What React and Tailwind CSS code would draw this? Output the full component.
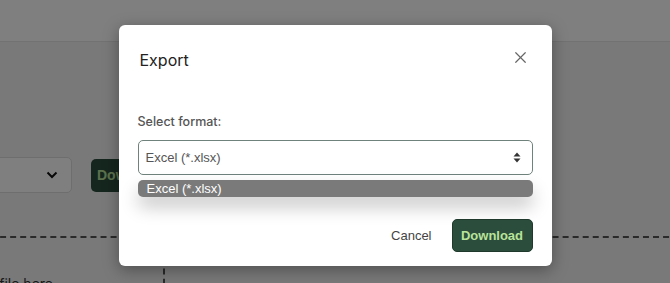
import { X } from 'lucide-react';

function UpDown() {
  return (
    <svg width="8" height="11" viewBox="0 0 8 11" className="text-[#333]">
      <path d="M4 0.5 L7.5 4.5 H0.5 Z" fill="currentColor" />
      <path d="M4 10.5 L7.5 6.5 H0.5 Z" fill="currentColor" />
    </svg>
  );
}

function Chevron() {
  return (
    <svg width="12" height="8" viewBox="0 0 12 8">
      <path d="M1.5 1.5 L6 6 L10.5 1.5" fill="none" stroke="#111" strokeWidth="2" />
    </svg>
  );
}

function BackgroundPage() {
  return (
    <div className="h-[283px] w-[670px] bg-[#f3f3f3] overflow-hidden">
      <div className="h-[42px] bg-white border-b border-[#e4e4e4]" />
      <div className="flex items-start mt-[115px]">
        <div className="-ml-[100px] w-[172px] h-[36px] border border-[#dcdcdc] rounded-[5px] bg-white flex items-center justify-end pr-[13px]">
          <Chevron />
        </div>
        <div className="ml-[19px] mt-[2px] w-[110px] h-[33px] rounded-[5px] bg-[#2b4d3c] flex items-center pl-[6px] text-[14px] font-bold text-[#b9e39a] font-['Liberation_Sans',sans-serif]">
          Download
        </div>
      </div>
      <div className="mt-[43px] -ml-[20px] w-[900px] h-[120px] border-t-2 border-dashed border-[#555] flex">
        <div className="w-[185px] border-r-2 border-dashed border-[#555] flex items-start justify-end pr-[110px] pt-[35px] text-[14px] text-[#333] font-['Inter',sans-serif]">
          <span className="whitespace-nowrap shrink-0">Drop file here</span>
        </div>
      </div>
    </div>
  );
}

export default function App() {
  return (
    <div className="relative w-[670px] h-[283px] overflow-hidden font-['Inter',sans-serif]">
      <BackgroundPage />
      <div className="absolute inset-0 bg-black/50 flex justify-center pt-[25px]">
        <div className="w-[433px] h-[241px] bg-white rounded-[6px] shadow-[0_4px_16px_rgba(0,0,0,0.35)] px-[19px] pt-[20px] flex flex-col">
          <div className="h-[30px] flex items-center justify-between">
            <h2 className="ml-[2px] text-[16px] text-[#222]">Export</h2>
            <X size={19} strokeWidth={1.5} className="text-[#666] mr-[3px] -mt-[6px]" />
          </div>
          <label className="mt-[38px] text-[12.5px] leading-[18px] font-medium text-[#555]">Select format:</label>
          <div className="mt-[9px] h-[35px] border-[1.5px] border-[#6f827c] rounded-[5px] flex items-center justify-between pl-[7px] pr-[11px] text-[13px] text-[#555] font-['Liberation_Sans',sans-serif]">
            <span>Excel (*.xlsx)</span>
            <UpDown />
          </div>
          <div className="mt-[5px] h-[17px] rounded-[5px] bg-[#7a7a7a] text-white text-[13px] leading-[17px] pl-[9px] font-['Liberation_Sans',sans-serif] shadow-[0_10px_18px_rgba(0,0,0,0.22)]">
            Excel (*.xlsx)
          </div>
          <div className="mt-[22px] flex items-center justify-end gap-[19px] font-['Liberation_Sans',sans-serif] text-[13px]">
            <span className="text-[#444] mr-[1px]">Cancel</span>
            <div className="w-[81px] h-[33px] rounded-[5px] bg-[#2b4d3c] border border-[#1f3a2d] flex items-center justify-center font-bold text-[#b9e39a]">
              Download
            </div>
          </div>
        </div>
      </div>
    </div>
  );
}
